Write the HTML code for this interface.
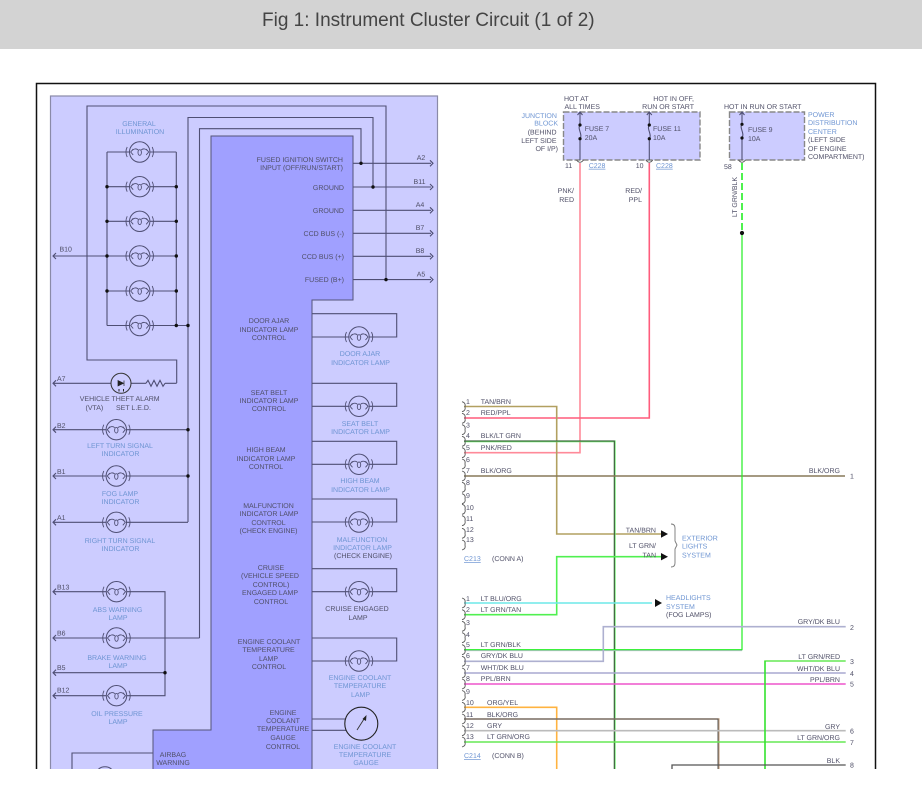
<!DOCTYPE html>
<html lang="en"><head><meta charset="utf-8"><title>Fig 1: Instrument Cluster Circuit (1 of 2)</title>
<style>
html,body{margin:0;padding:0;background:#fff;width:922px;height:794px;overflow:hidden}
.bar{position:absolute;left:0;top:0;width:922px;height:49px;background:#d3d3d3}
.bar div{position:absolute;left:262px;top:8px;font:19px/26px "Liberation Sans",sans-serif;color:#444;white-space:nowrap}
svg{position:absolute;left:0;top:0}
text{font:7px "Liberation Sans",sans-serif;fill:#4e4e66;text-rendering:geometricPrecision}
.b{fill:#6d94d2}.m{text-anchor:middle}.e{text-anchor:end}
.w{fill:none;stroke:#4f4f74;stroke-width:1.1}
.u{text-decoration:underline}
</style></head><body>
<div class="bar"><div>Fig 1: Instrument Cluster Circuit (1 of 2)</div></div>
<svg width="922" height="769" viewBox="0 0 922 769" xmlns="http://www.w3.org/2000/svg">
<defs>
<g id="L">
<circle r="10.2" fill="#ccf" stroke="#4f4f74" stroke-width="1"/>
<path fill="none" stroke="#4f4f74" stroke-width=".9" d="M-12.5-5Q-15 0-12.5 5M12.5-5Q15 0 12.5 5M-6.5-3L-9 0-6.500 3M6.500-3L9 0 6.500 3M-9 0Q-5-5-1.500-2M9 0Q5-5 1.500-2"/>
<ellipse cy=".5" rx="1.700" ry="2.800" fill="none" stroke="#4f4f74" stroke-width=".9"/>
</g>
<g id="P"><path fill="none" stroke="#555" stroke-width=".9" d="M-1-5Q3-4 2 0Q3 4-1 5"/></g>
</defs>
<rect x="36.500" y="83.500" width="839" height="700" fill="#fff" stroke="#111" stroke-width="1.500"/>

<!-- panels -->
<rect x="50.500" y="96" width="387" height="690" fill="#ccf" stroke="#8a8aa8" stroke-width="1.200"/>
<path d="M211 136H353V300H312V780H153V730H211Z" fill="#a0a0ff" stroke="#55557a" stroke-width="1"/>

<!-- frame wires -->
<path class="w" d="M176.700 383V360H87V106H386V280"/>
<path class="w" d="M188 522V117.500H373V187"/>
<path class="w" d="M199.500 638V128.700H361V163"/>
<path class="w" d="M353 163.300H431M353 187H431M353 210.300H431M353 233.300H431M353 256.300H431M353 279.600H431"/>
<path class="w" d="M430 160.300l3 3-3 3M430 184l3 3-3 3M430 207.300l3 3-3 3M430 230.300l3 3-3 3M430 253.300l3 3-3 3M430 276.600l3 3-3 3"/>

<!-- illumination -->
<path class="w" d="M107 152V325.500M176.300 152V325.500M107 152H176.300M107 186.700H176.300M107 221.300H176.300M107 256H176.300M107 291H176.300M107 325.500H188M53 256H107M56 253l-3 3 3 3"/>
<use href="#L" x="139.700" y="152"/><use href="#L" x="139.700" y="186.700"/><use href="#L" x="139.700" y="221.300"/><use href="#L" x="139.700" y="256"/><use href="#L" x="139.700" y="291"/><use href="#L" x="139.700" y="325.500"/>

<!-- VTA -->
<path class="w" d="M53 383.300H111M131 383.300H146M165 383.300H176.700M56 380.300l-3 3 3 3"/>
<path class="w" d="M146 383.300l2-3 3 6 3-6 3 6 3-6 3 6 2-3"/>
<circle cx="121" cy="383.300" r="10" fill="#ccf" stroke="#333" stroke-width="1"/>
<path d="M118 380.500L123.500 383.300 118 386ZM124 380.500V386" fill="#222" stroke="#222" stroke-width=".7"/>
<path d="M119 389v2.500M123.500 389v2.500" stroke="#222" stroke-width="1"/>

<!-- left lamps -->
<path class="w" d="M53 429.700H188M53 476H188M53 522.300H188M56 426.700l-3 3 3 3M56 473l-3 3 3 3M56 519.300l-3 3 3 3"/>
<use href="#L" x="116.300" y="429.700"/><use href="#L" x="116.300" y="476"/><use href="#L" x="116.300" y="522.300"/>
<path class="w" d="M53 591.700H165V695.700H53M53 638H199.500M53 672.700H165M56 588.700l-3 3 3 3M56 635l-3 3 3 3M56 669.700l-3 3 3 3M56 692.700l-3 3 3 3"/>
<use href="#L" x="116.500" y="591.700"/><use href="#L" x="116.500" y="638"/><use href="#L" x="116.500" y="695.700"/>
<path class="w" d="M153 753H72V780"/>
<use href="#L" x="105" y="777"/>

<!-- right loops -->
<path class="w" d="M312 313.700H396.700V337H312M312 383.300H396.700V406.300H312M312 441.300H396.700V464.300H312M312 499H396.700V522H312M312 568.700H396.700V591.700H312M312 638H396.700V661H312M312 719H346M312 730.300H346"/>
<use href="#L" x="359" y="337"/><use href="#L" x="359" y="406.300"/><use href="#L" x="359" y="464.300"/><use href="#L" x="359" y="522"/><use href="#L" x="359" y="591.700"/><use href="#L" x="359" y="661"/>
<circle cx="361.300" cy="723.700" r="16.500" fill="#ccf" stroke="#222" stroke-width="1.100"/>
<path d="M357 730L365 717.500" stroke="#333" stroke-width=".9"/><path d="M366.500 715l-.5 6-3.500-2z" fill="#222"/>

<!-- dots -->
<g fill="#111">
<circle cx="107" cy="186.700" r="1.700"/><circle cx="107" cy="221.300" r="1.700"/><circle cx="107" cy="256" r="1.700"/><circle cx="107" cy="291" r="1.700"/>
<circle cx="176.300" cy="186.700" r="1.700"/><circle cx="176.300" cy="221.300" r="1.700"/><circle cx="176.300" cy="256" r="1.700"/><circle cx="176.300" cy="291" r="1.700"/><circle cx="176.300" cy="325.500" r="1.700"/>
<circle cx="188" cy="325.500" r="1.700"/><circle cx="188" cy="429.700" r="1.700"/><circle cx="188" cy="476" r="1.700"/><circle cx="165" cy="672.700" r="1.700"/>
<circle cx="361" cy="163.300" r="1.700"/><circle cx="373" cy="187" r="1.700"/><circle cx="386" cy="279.600" r="1.700"/>
</g>

<!-- left panel text -->
<text class="b m" x="139" y="126">GENERAL</text><text class="b m" x="140" y="134">ILLUMINATION</text>
<text class="b m" x="120" y="448">LEFT TURN SIGNAL</text><text class="b m" x="120.500" y="456">INDICATOR</text>
<text class="b m" x="120" y="496">FOG LAMP</text><text class="b m" x="120.500" y="504">INDICATOR</text>
<text class="b m" x="120" y="543">RIGHT TURN SIGNAL</text><text class="b m" x="120.500" y="551">INDICATOR</text>
<text class="b m" x="117.500" y="612">ABS WARNING</text><text class="b m" x="118" y="620">LAMP</text>
<text class="b m" x="117" y="660">BRAKE WARNING</text><text class="b m" x="118" y="668">LAMP</text>
<text class="b m" x="117" y="716">OIL PRESSURE</text><text class="b m" x="118" y="724">LAMP</text>
<text class="b m" x="360" y="356">DOOR AJAR</text><text class="b m" x="360.500" y="365">INDICATOR LAMP</text>
<text class="b m" x="360" y="426">SEAT BELT</text><text class="b m" x="360.500" y="434">INDICATOR LAMP</text>
<text class="b m" x="360" y="483">HIGH BEAM</text><text class="b m" x="360.500" y="492">INDICATOR LAMP</text>
<text class="b m" x="362" y="542">MALFUNCTION</text><text class="b m" x="362.500" y="550">INDICATOR LAMP</text>
<text class="b m" x="360" y="680">ENGINE COOLANT</text><text class="b m" x="360" y="688">TEMPERATURE</text><text class="b m" x="360.500" y="697">LAMP</text>
<text class="b m" x="365" y="749">ENGINE COOLANT</text><text class="b m" x="365" y="757">TEMPERATURE</text><text class="b m" x="366" y="765">GAUGE</text>
<text x="59.500" y="251.500">B10</text>
<text x="57" y="381">A7</text><text x="57" y="428">B2</text><text x="57" y="474">B1</text><text x="57" y="520">A1</text>
<text x="57" y="589.500">B13</text><text x="57" y="635.500">B6</text><text x="57" y="670">B5</text><text x="57" y="692.500">B12</text>
<text class="m" x="119.700" y="400.800">VEHICLE THEFT ALARM</text><text x="85.500" y="410">(VTA)</text><text x="116" y="410">SET L.E.D.</text>
<text class="e" x="343" y="161.800">FUSED IGNITION SWITCH</text><text class="e" x="343" y="169.800">INPUT (OFF/RUN/START)</text>
<text class="e" x="344" y="190">GROUND</text><text class="e" x="344" y="213">GROUND</text><text class="e" x="344" y="236">CCD BUS (-)</text><text class="e" x="344" y="259">CCD BUS (+)</text><text class="e" x="344" y="282">FUSED (B+)</text>
<text class="m" x="421" y="160">A2</text><text class="m" x="419.500" y="184">B11</text><text class="m" x="420" y="207">A4</text><text class="m" x="420" y="230">B7</text><text class="m" x="420" y="253">B8</text><text class="m" x="421" y="276.500">A5</text>
<text class="m" x="269" y="323">DOOR AJAR</text><text class="m" x="269" y="332">INDICATOR LAMP</text><text class="m" x="269" y="340">CONTROL</text>
<text class="m" x="269" y="395">SEAT BELT</text><text class="m" x="269" y="403">INDICATOR LAMP</text><text class="m" x="269" y="411">CONTROL</text>
<text class="m" x="266" y="452">HIGH BEAM</text><text class="m" x="266" y="461">INDICATOR LAMP</text><text class="m" x="266" y="469">CONTROL</text>
<text class="m" x="268.500" y="508">MALFUNCTION</text><text class="m" x="269" y="516">INDICATOR LAMP</text><text class="m" x="268.500" y="525">CONTROL</text><text class="m" x="268.500" y="533">(CHECK ENGINE)</text>
<text class="m" x="271" y="570">CRUISE</text><text class="m" x="270" y="578">(VEHICLE SPEED</text><text class="m" x="271" y="587">CONTROL)</text><text class="m" x="270" y="595">ENGAGED LAMP</text><text class="m" x="271" y="604">CONTROL</text>
<text class="m" x="269" y="644">ENGINE COOLANT</text><text class="m" x="268.500" y="652">TEMPERATURE</text><text class="m" x="268.500" y="661">LAMP</text><text class="m" x="269" y="669">CONTROL</text>
<text class="m" x="283" y="715">ENGINE</text><text class="m" x="283" y="723">COOLANT</text><text class="m" x="283" y="731">TEMPERATURE</text><text class="m" x="283" y="740">GAUGE</text><text class="m" x="283" y="749">CONTROL</text>
<text class="m" x="173" y="757">AIRBAG</text><text class="m" x="173" y="765">WARNING</text>
<text class="m" x="363" y="558">(CHECK ENGINE)</text>
<text class="m" x="357" y="611">CRUISE ENGAGED</text><text class="m" x="358" y="620">LAMP</text>

<!-- fuse boxes -->
<rect x="563.500" y="112" width="136.500" height="48" fill="#ccf" stroke="#888" stroke-width="1.400" stroke-dasharray="6 2"/>
<rect x="729.500" y="112" width="75" height="48" fill="#ccf" stroke="#888" stroke-width="1.400" stroke-dasharray="6 2"/>
<path class="w" d="M580 112V125M580 139V160M577.500 115l2.500-3 2.500 3M649.300 112V125M649.300 139V160M646.800 115l2.500-3 2.500 3M742 112V124M742 138V160M739.500 115l2.500-3 2.500 3"/>
<path class="w" d="M580 125C577 129 583 134 580 139M649.300 125C646.300 129 652.300 134 649.300 139M742 124C739 128 745 133 742 138"/>
<path fill="none" stroke="#555" stroke-width=".9" d="M576.500 160Q580 164.500 583.500 160M645.800 160Q649.300 164.500 652.800 160M738.500 160Q742 164.500 745.500 160"/>

<!-- coloured wires -->
<g fill="none" stroke-width="1.600">
<path stroke="#ff8a99" d="M580 163V452.700H464"/>
<path stroke="#ff5c7c" d="M649.300 163V418H464"/>
<path stroke="#b2a060" d="M464 406.500H556.700V534H661"/>
<path stroke="#65ee65" stroke-width="1.800" d="M464 441.300H614.700V769"/>
<path stroke="#3d4a3d" stroke-width="1" d="M464 441H614.300V769"/>
<path stroke="#a59268" d="M464 476H845"/>
<path stroke="#6a6048" stroke-width=".7" d="M464 476H845"/>
<path stroke="#50f050" d="M661 556.700H556.700V614.700H464"/>
<path stroke="#6de8e8" d="M464 603H652"/>
<path stroke="#b5b8cc" stroke-width="1" d="M464 650.600H742"/>
<path stroke="#22ee22" stroke-width="1.200" d="M464 649.700H742V235"/>
<path stroke="#22ee22" stroke-dasharray="7 3" d="M742 163V231"/>
<path stroke="#aeb0d0" d="M464 661.300H603.300V626.700H845.700"/>
<path stroke="#a8a8d0" d="M464 673H845.700"/>
<path stroke="#ee55cc" d="M464 684H845.700"/>
<path stroke="#ffb340" d="M464 707.300H556.700V769"/>
<path stroke="#c09a78" d="M464 719H718.700V769"/>
<path stroke="#555" stroke-width="1" d="M464 719H718V769"/>
<path stroke="#bbb" d="M464 730.700H845.700"/>
<path stroke="#66e855" d="M464 742H845.700"/>
<path stroke="#66e855" d="M845.700 661H765V769"/>
<path stroke="#22e022" stroke-width="1.100" d="M765 661V769"/>
<path stroke="#555" stroke-width="1.300" d="M845.700 765H672V769"/>
</g>
<g fill="#111"><circle cx="580" cy="125" r="1.600"/><circle cx="580" cy="138.700" r="1.600"/><circle cx="649.300" cy="125" r="1.600"/><circle cx="649.300" cy="138.700" r="1.600"/><circle cx="742" cy="124.300" r="1.600"/><circle cx="742" cy="138" r="1.600"/><circle cx="742" cy="233" r="2.100"/></g>
<path d="M661 530.300L668 534 661 537.700ZM661 553L668 556.700 661 560.400ZM655 599L662 603 655 607Z" fill="#111"/>
<path fill="none" stroke="#777" stroke-width=".9" d="M671 524Q675 524 675 528V541L677 545 675 549V563Q675 567 671 567"/>

<!-- connector arcs -->
<g>
<use href="#P" x="463" y="406.700"/><use href="#P" x="463" y="418.300"/><use href="#P" x="463" y="429.700"/><use href="#P" x="463" y="441.300"/><use href="#P" x="463" y="452.700"/><use href="#P" x="463" y="464"/><use href="#P" x="463" y="476"/><use href="#P" x="463" y="487.300"/><use href="#P" x="463" y="498.700"/><use href="#P" x="463" y="509.300"/><use href="#P" x="463" y="520.700"/><use href="#P" x="463" y="533.300"/><use href="#P" x="463" y="545"/>
<use href="#P" x="463" y="603"/><use href="#P" x="463" y="614.700"/><use href="#P" x="463" y="626.300"/><use href="#P" x="463" y="637.700"/><use href="#P" x="463" y="649.700"/><use href="#P" x="463" y="661.300"/><use href="#P" x="463" y="673"/><use href="#P" x="463" y="684"/><use href="#P" x="463" y="695.500"/><use href="#P" x="463" y="707.300"/><use href="#P" x="463" y="719"/><use href="#P" x="463" y="730.700"/><use href="#P" x="463" y="742"/>
</g>

<!-- right side text -->
<text x="564" y="100.800">HOT AT</text><text x="564.500" y="108.800">ALL TIMES</text>
<text class="e" x="694" y="100.800">HOT IN OFF,</text><text class="e" x="694" y="108.800">RUN OR START</text>
<text x="724" y="108.800">HOT IN RUN OR START</text>
<text class="b" x="521.500" y="118">JUNCTION</text><text class="b e" x="558" y="125.500">BLOCK</text><text class="e" x="556.500" y="134.500">(BEHIND</text><text class="e" x="556.500" y="143">LEFT SIDE</text><text class="e" x="558" y="151">OF I/P)</text>
<text class="b" x="808" y="116.800">POWER</text><text class="b" x="808" y="125">DISTRIBUTION</text><text class="b" x="808" y="133.800">CENTER</text><text x="808" y="142">(LEFT SIDE</text><text x="808" y="151">OF ENGINE</text><text x="808" y="158.800">COMPARTMENT)</text>
<text x="584.700" y="131.200">FUSE 7</text><text x="584.700" y="140.200">20A</text>
<text x="653" y="131.200">FUSE 11</text><text x="653" y="140.200">10A</text>
<text x="748" y="131.800">FUSE 9</text><text x="748" y="141">10A</text>
<text x="565" y="167.800">11</text><text class="b u" x="588.700" y="167.800">C228</text>
<text x="635.700" y="167.800">10</text><text class="b u" x="656" y="167.800">C228</text>
<text x="724" y="168.800">58</text>
<text class="e" x="574" y="192.800">PNK/</text><text class="e" x="574" y="201.800">RED</text>
<text class="e" x="642" y="192.800">RED/</text><text class="e" x="642" y="201.800">PPL</text>
<text class="m" transform="translate(737 197) rotate(-90)">LT GRN/BLK</text>

<text x="466" y="404.200">1</text><text x="466" y="415.200">2</text><text x="466" y="427.500">3</text><text x="466" y="438.200">4</text><text x="466" y="449.800">5</text><text x="466" y="461.800">6</text><text x="466" y="472.800">7</text><text x="466" y="484.800">8</text><text x="466" y="497.800">9</text><text x="466" y="509.800">10</text><text x="466" y="521.200">11</text><text x="466" y="531.800">12</text><text x="466" y="541.800">13</text>
<text x="480.700" y="404.200">TAN/BRN</text><text x="480.700" y="415.200">RED/PPL</text><text x="480.700" y="438.200">BLK/LT GRN</text><text x="480.700" y="449.800">PNK/RED</text><text x="480.700" y="472.800">BLK/ORG</text>
<text class="e" x="840" y="473">BLK/ORG</text><text x="850" y="478.500">1</text>
<text class="e" x="656" y="532.500">TAN/BRN</text><text class="e" x="656" y="548">LT GRN/</text><text class="e" x="656" y="557.500">TAN</text>
<text class="b" x="682" y="540.500">EXTERIOR</text><text class="b" x="682" y="548.500">LIGHTS</text><text class="b" x="682" y="557.500">SYSTEM</text>
<text class="b u" x="464" y="561">C213</text><text x="492" y="561">(CONN A)</text>
<text class="b" x="666" y="599.800">HEADLIGHTS</text><text class="b" x="666" y="608.800">SYSTEM</text><text x="666" y="616.800">(FOG LAMPS)</text>

<text x="466" y="600.800">1</text><text x="466" y="611.800">2</text><text x="466" y="624.800">3</text><text x="466" y="637.200">4</text><text x="466" y="647.200">5</text><text x="466" y="657.800">6</text><text x="466" y="670.200">7</text><text x="466" y="681.200">8</text><text x="466" y="693.800">9</text><text x="466" y="704.800">10</text><text x="466" y="716.800">11</text><text x="466" y="727.800">12</text><text x="466" y="738.800">13</text>
<text x="480.700" y="600.800">LT BLU/ORG</text><text x="480.700" y="611.800">LT GRN/TAN</text><text x="480.700" y="647">LT GRN/BLK</text><text x="480.700" y="657.800">GRY/DK BLU</text><text x="480.700" y="670.200">WHT/DK BLU</text><text x="480.700" y="681.200">PPL/BRN</text>
<text x="487" y="704.800">ORG/YEL</text><text x="487" y="716.800">BLK/ORG</text><text x="487" y="727.800">GRY</text><text x="487" y="738.800">LT GRN/ORG</text>
<text class="b u" x="464" y="758.200">C214</text><text x="492" y="758.200">(CONN B)</text>
<text class="e" x="840" y="623.800">GRY/DK BLU</text><text class="e" x="840" y="659">LT GRN/RED</text><text class="e" x="840" y="671">WHT/DK BLU</text><text class="e" x="840" y="681.800">PPL/BRN</text><text class="e" x="840" y="728.800">GRY</text><text class="e" x="840" y="739.800">LT GRN/ORG</text><text class="e" x="840" y="763">BLK</text>
<text x="850" y="630">2</text><text x="850" y="663.800">3</text><text x="850" y="676">4</text><text x="850" y="686.500">5</text><text x="850" y="733.500">6</text><text x="850" y="745">7</text><text x="850" y="767.500">8</text>
</svg>
</body></html>
